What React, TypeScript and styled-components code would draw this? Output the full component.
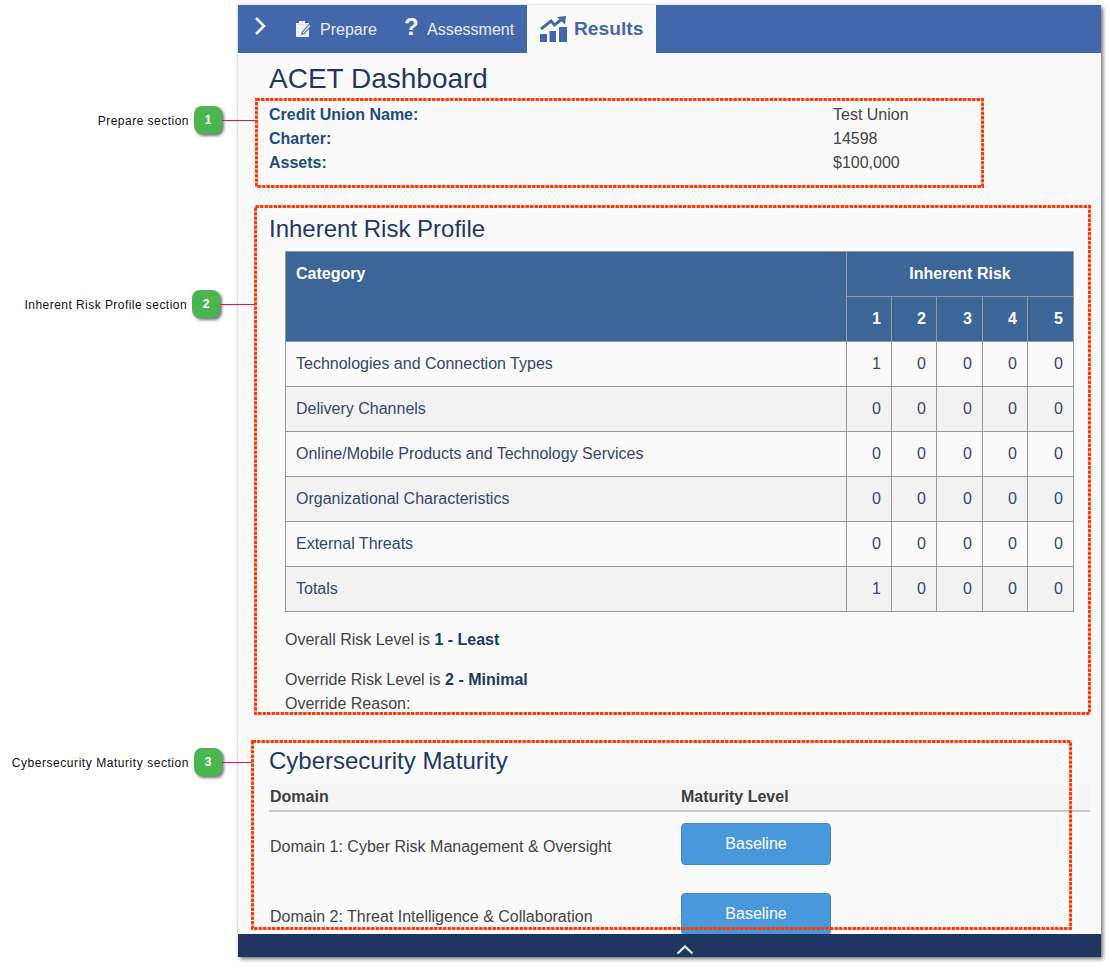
import React from "react";
import styled, { createGlobalStyle } from "styled-components";

const Global = createGlobalStyle`
  html, body { margin: 0; padding: 0; background: #fff; }
  body { font-family: "Liberation Sans", Arial, sans-serif; }
`;

const Page = styled.div`
  position: relative;
  width: 1110px;
  height: 966px;
  overflow: hidden;
  background: #fff;
  display: flex;
`;

const Gutter = styled.aside`
  position: relative;
  width: 238px;
  flex: none;
`;

const Callout = styled.div<{ $top: number; $right: number }>`
  position: absolute;
  top: ${(p) => p.$top}px;
  right: ${(p) => p.$right}px;
  display: flex;
  align-items: center;
  gap: 5px;
  height: 28px;
`;

const CalloutLabel = styled.span<{ $track: number }>`
  font-size: 12px;
  letter-spacing: ${(p) => p.$track}px;
  margin-top: 1px;
  color: #111;
  white-space: nowrap;
`;

const Badge = styled.span`
  width: 28px;
  height: 28px;
  border-radius: 8px;
  background: #4bb64f;
  box-shadow: 2px 2px 3px rgba(0, 0, 0, 0.55);
  color: #fff;
  font-size: 12px;
  font-weight: 700;
  display: flex;
  align-items: center;
  justify-content: center;
`;

const Connector = styled.span<{ $w: number }>`
  width: ${(p) => p.$w}px;
  height: 1px;
  margin-left: -5px;
  background: #ee0f4b;
`;

const Window = styled.main`
  width: 863px;
  height: 952px;
  margin-top: 5px;
  background: #fafafa;
  display: flex;
  flex-direction: column;
  box-shadow: 2px 2px 4px rgba(0, 0, 0, 0.55), -1px 0 2px rgba(0, 0, 0, 0.08);
`;

const Nav = styled.nav`
  height: 48px;
  flex: none;
  background: #4367ab;
  display: flex;
  align-items: stretch;
`;

const Toggle = styled.div`
  width: 46px;
  padding: 11px 0 0 15px;
  box-sizing: border-box;
`;

const NavItem = styled.div<{ $w: number; $gap: number; $pad: number }>`
  width: ${(p) => p.$w}px;
  padding-left: ${(p) => p.$pad}px;
  box-sizing: border-box;
  display: flex;
  align-items: center;
  gap: ${(p) => p.$gap}px;
  color: #e9eef7;
  font-size: 16px;
  padding-top: 1px;
`;

const HelpGlyph = styled.span`
  font-size: 24px;
  font-weight: 700;
  color: #f2f4f9;
  margin-top: -5px;
  width: 14px;
  line-height: 1;
`;

const ActiveTab = styled.div`
  width: 129px;
  padding-left: 13px;
  box-sizing: border-box;
  background: #fafafa;
  display: flex;
  align-items: center;
  gap: 7px;
  color: #4367ab;
  font-size: 19.2px;
  font-weight: 700;
`;

const Content = styled.div`
  flex: 1;
  min-height: 0;
  overflow: hidden;
  padding: 0 11px 0 31px;
`;

const Title = styled.h1`
  margin: 8px 0 0;
  height: 35px;
  line-height: 35px;
  font-size: 28px;
  font-weight: 400;
  color: #1f3864;
`;

const InfoList = styled.dl`
  margin: 7px 0 0;
  display: grid;
  grid-template-columns: 564px 1fr;
  grid-auto-rows: 24px;
  font-size: 16px;
  line-height: 24px;
  height: 72px;
`;

const InfoKey = styled.dt`
  font-weight: 700;
  color: #1d4e79;
`;

const InfoValue = styled.dd`
  margin: 0;
  color: #444;
`;

const SectionTitle = styled.h2<{ $top: number }>`
  margin: ${(p) => p.$top}px 0 0;
  height: 30px;
  line-height: 30px;
  font-size: 24px;
  font-weight: 400;
  color: #1f3864;
`;

const RiskTable = styled.table`
  margin: 7px 0 0 16px;
  border-collapse: collapse;
  table-layout: fixed;
  width: 789px;
  font-size: 16px;
`;

const HeadCell = styled.th<{ $center?: boolean; $right?: boolean }>`
  height: 45px;
  box-sizing: border-box;
  padding: 0 10px;
  background: #3c6698;
  border: 1px solid #999;
  color: #fff;
  font-weight: 700;
  text-align: ${(p) => (p.$center ? "center" : p.$right ? "right" : "left")};
  vertical-align: ${(p) => (p.$right || p.$center ? "middle" : "top")};
  ${(p) => (!p.$right && !p.$center ? "padding-top: 13px;" : "")}
`;

const Row = styled.tr<{ $alt: boolean }>`
  background: ${(p) => (p.$alt ? "#f2f2f2" : "#fafafa")};
`;

const Cell = styled.td<{ $num?: boolean }>`
  height: 45px;
  box-sizing: border-box;
  padding: 0 10px;
  border: 1px solid #999;
  color: #34476a;
  text-align: ${(p) => (p.$num ? "right" : "left")};
`;

const Summary = styled.p<{ $top: number }>`
  margin: ${(p) => p.$top}px 0 0 16px;
  font-size: 16px;
  line-height: 24px;
  color: #444;
`;

const Level = styled.b`
  color: #1f3864;
`;

const DomainHead = styled.div`
  margin-top: 8px;
  height: 28px;
  box-sizing: border-box;
  background: #f5f5f5;
  border-bottom: 2px solid #ccc;
  display: grid;
  grid-template-columns: 411px 1fr;
  padding-left: 1px;
  font-size: 16px;
  font-weight: 700;
  line-height: 26px;
  color: #3f3f3f;
`;

const DomainRow = styled.div`
  height: 70px;
  display: grid;
  grid-template-columns: 411px 1fr;
  padding-left: 1px;
  padding-top: 11px;
  box-sizing: border-box;
  font-size: 16px;
  color: #444;
`;

const DomainName = styled.span`
  line-height: 48px;
`;

const LevelButton = styled.button`
  width: 150px;
  height: 42px;
  padding: 0;
  background: #4a98dc;
  border: 1px solid #428bca;
  border-radius: 4px;
  color: #fff;
  font: 16px "Liberation Sans", Arial, sans-serif;
`;

const Footer = styled.footer`
  height: 23px;
  flex: none;
  background: #1f3660;
  display: flex;
  justify-content: center;
  align-items: flex-end;
  padding-left: 30px;
  padding-bottom: 2px;
  box-sizing: border-box;
`;

const Marker = styled.svg<{ $x: number; $y: number }>`
  position: absolute;
  left: ${(p) => p.$x}px;
  top: ${(p) => p.$y}px;
  pointer-events: none;
`;

function DashedBox({ x, y, w, h }: { x: number; y: number; w: number; h: number }) {
  return (
    <Marker $x={x} $y={y} width={w} height={h}>
      <rect x="1.5" y="1.5" width={w - 3} height={h - 3} fill="none" stroke="#ff3c08" strokeWidth="3" strokeDasharray="3.5 1" />
    </Marker>
  );
}

const categories = [
  { name: "Technologies and Connection Types", v: [1, 0, 0, 0, 0] },
  { name: "Delivery Channels", v: [0, 0, 0, 0, 0] },
  { name: "Online/Mobile Products and Technology Services", v: [0, 0, 0, 0, 0] },
  { name: "Organizational Characteristics", v: [0, 0, 0, 0, 0] },
  { name: "External Threats", v: [0, 0, 0, 0, 0] },
  { name: "Totals", v: [1, 0, 0, 0, 0] },
];

const ClipboardIcon = () => (
  <svg width="17" height="17" viewBox="0 0 17 17">
    <path fill="#eef1f7" d="M0 2h3V0h6v2h4v14H0z" />
    <path fill="#d5dcec" d="M1 3h11v1H1z" />
    <path fill="#4367ab" d="M13.500 2.500l2.500 2.500-7.500 8-3.500 1 1-3.500z" />
    <path fill="#eef1f7" d="M13.500 4l1 1-6.500 7-1.500.5.500-1.500z" />
  </svg>
);

const ChartIcon = () => (
  <svg width="27" height="26" viewBox="0 0 27 26">
    <path fill="#4367ab" d="M0 18h7v8H0zM9.500 15H16v11H9.500zM19 11h8v15h-8z" />
    <path fill="none" stroke="#4367ab" strokeWidth="3" d="M1 13L11 5l3.500 4L22 3" />
    <path fill="#4367ab" d="M17 1l9-1-1 8.500z" />
  </svg>
);

export default function App() {
  return (
    <Page>
      <Global />
      <Gutter>
        <Callout $top={106} $right={-18}>
          <CalloutLabel $track={0.48}>Prepare section</CalloutLabel>
          <Badge>1</Badge>
          <Connector $w={34} />
        </Callout>
        <Callout $top={290} $right={-17}>
          <CalloutLabel $track={0.45}>Inherent Risk Profile section</CalloutLabel>
          <Badge>2</Badge>
          <Connector $w={35} />
        </Callout>
        <Callout $top={748} $right={-14}>
          <CalloutLabel $track={0.55}>Cybersecurity Maturity section</CalloutLabel>
          <Badge>3</Badge>
          <Connector $w={30} />
        </Callout>
      </Gutter>
      <Window>
        <Nav>
          <Toggle>
            <svg width="14" height="20" viewBox="0 0 14 20">
              <path d="M3 2l8 8-8 8" fill="none" stroke="#f2f4f9" strokeWidth="2.6" />
            </svg>
          </Toggle>
          <NavItem $w={105} $pad={12} $gap={7}>
            <ClipboardIcon />
            Prepare
          </NavItem>
          <NavItem $w={138} $pad={15} $gap={9}>
            <HelpGlyph>?</HelpGlyph>
            Assessment
          </NavItem>
          <ActiveTab>
            <ChartIcon />
            Results
          </ActiveTab>
        </Nav>
        <Content>
          <Title>ACET Dashboard</Title>
          <InfoList>
            <InfoKey>Credit Union Name:</InfoKey>
            <InfoValue>Test Union</InfoValue>
            <InfoKey>Charter:</InfoKey>
            <InfoValue>14598</InfoValue>
            <InfoKey>Assets:</InfoKey>
            <InfoValue>$100,000</InfoValue>
          </InfoList>
          <SectionTitle $top={39}>Inherent Risk Profile</SectionTitle>
          <RiskTable>
            <colgroup>
              <col style={{ width: 561 }} />
              <col style={{ width: 45 }} />
              <col style={{ width: 45 }} />
              <col style={{ width: 46 }} />
              <col style={{ width: 45 }} />
              <col style={{ width: 46 }} />
            </colgroup>
            <thead>
              <tr>
                <HeadCell rowSpan={2}>Category</HeadCell>
                <HeadCell colSpan={5} $center>Inherent Risk</HeadCell>
              </tr>
              <tr>
                {[1, 2, 3, 4, 5].map((n) => (
                  <HeadCell key={n} $right>{n}</HeadCell>
                ))}
              </tr>
            </thead>
            <tbody>
              {categories.map((c, i) => (
                <Row key={c.name} $alt={i % 2 === 1}>
                  <Cell>{c.name}</Cell>
                  {c.v.map((n, j) => (
                    <Cell key={j} $num>{n}</Cell>
                  ))}
                </Row>
              ))}
            </tbody>
          </RiskTable>
          <Summary $top={16}>
            Overall Risk Level is <Level>1 - Least</Level>
          </Summary>
          <Summary $top={16}>
            Override Risk Level is <Level>2 - Minimal</Level>
            <br />
            Override Reason:
          </Summary>
          <SectionTitle $top={30}>Cybersecurity Maturity</SectionTitle>
          <DomainHead>
            <span>Domain</span>
            <span>Maturity Level</span>
          </DomainHead>
          <DomainRow>
            <DomainName>Domain 1: Cyber Risk Management &amp; Oversight</DomainName>
            <div><LevelButton>Baseline</LevelButton></div>
          </DomainRow>
          <DomainRow>
            <DomainName>Domain 2: Threat Intelligence &amp; Collaboration</DomainName>
            <div><LevelButton>Baseline</LevelButton></div>
          </DomainRow>
        </Content>
        <Footer>
          <svg width="18" height="11" viewBox="0 0 18 11">
            <path d="M1.500 9.500L9 2.500l7.500 7" fill="none" stroke="#eceff5" strokeWidth="2.2" />
          </svg>
        </Footer>
      </Window>
      <DashedBox x={255} y={98} w={729} h={90} />
      <DashedBox x={254} y={205} w={837} h={510} />
      <DashedBox x={251} y={740} w={821} h={190} />
    </Page>
  );
}
